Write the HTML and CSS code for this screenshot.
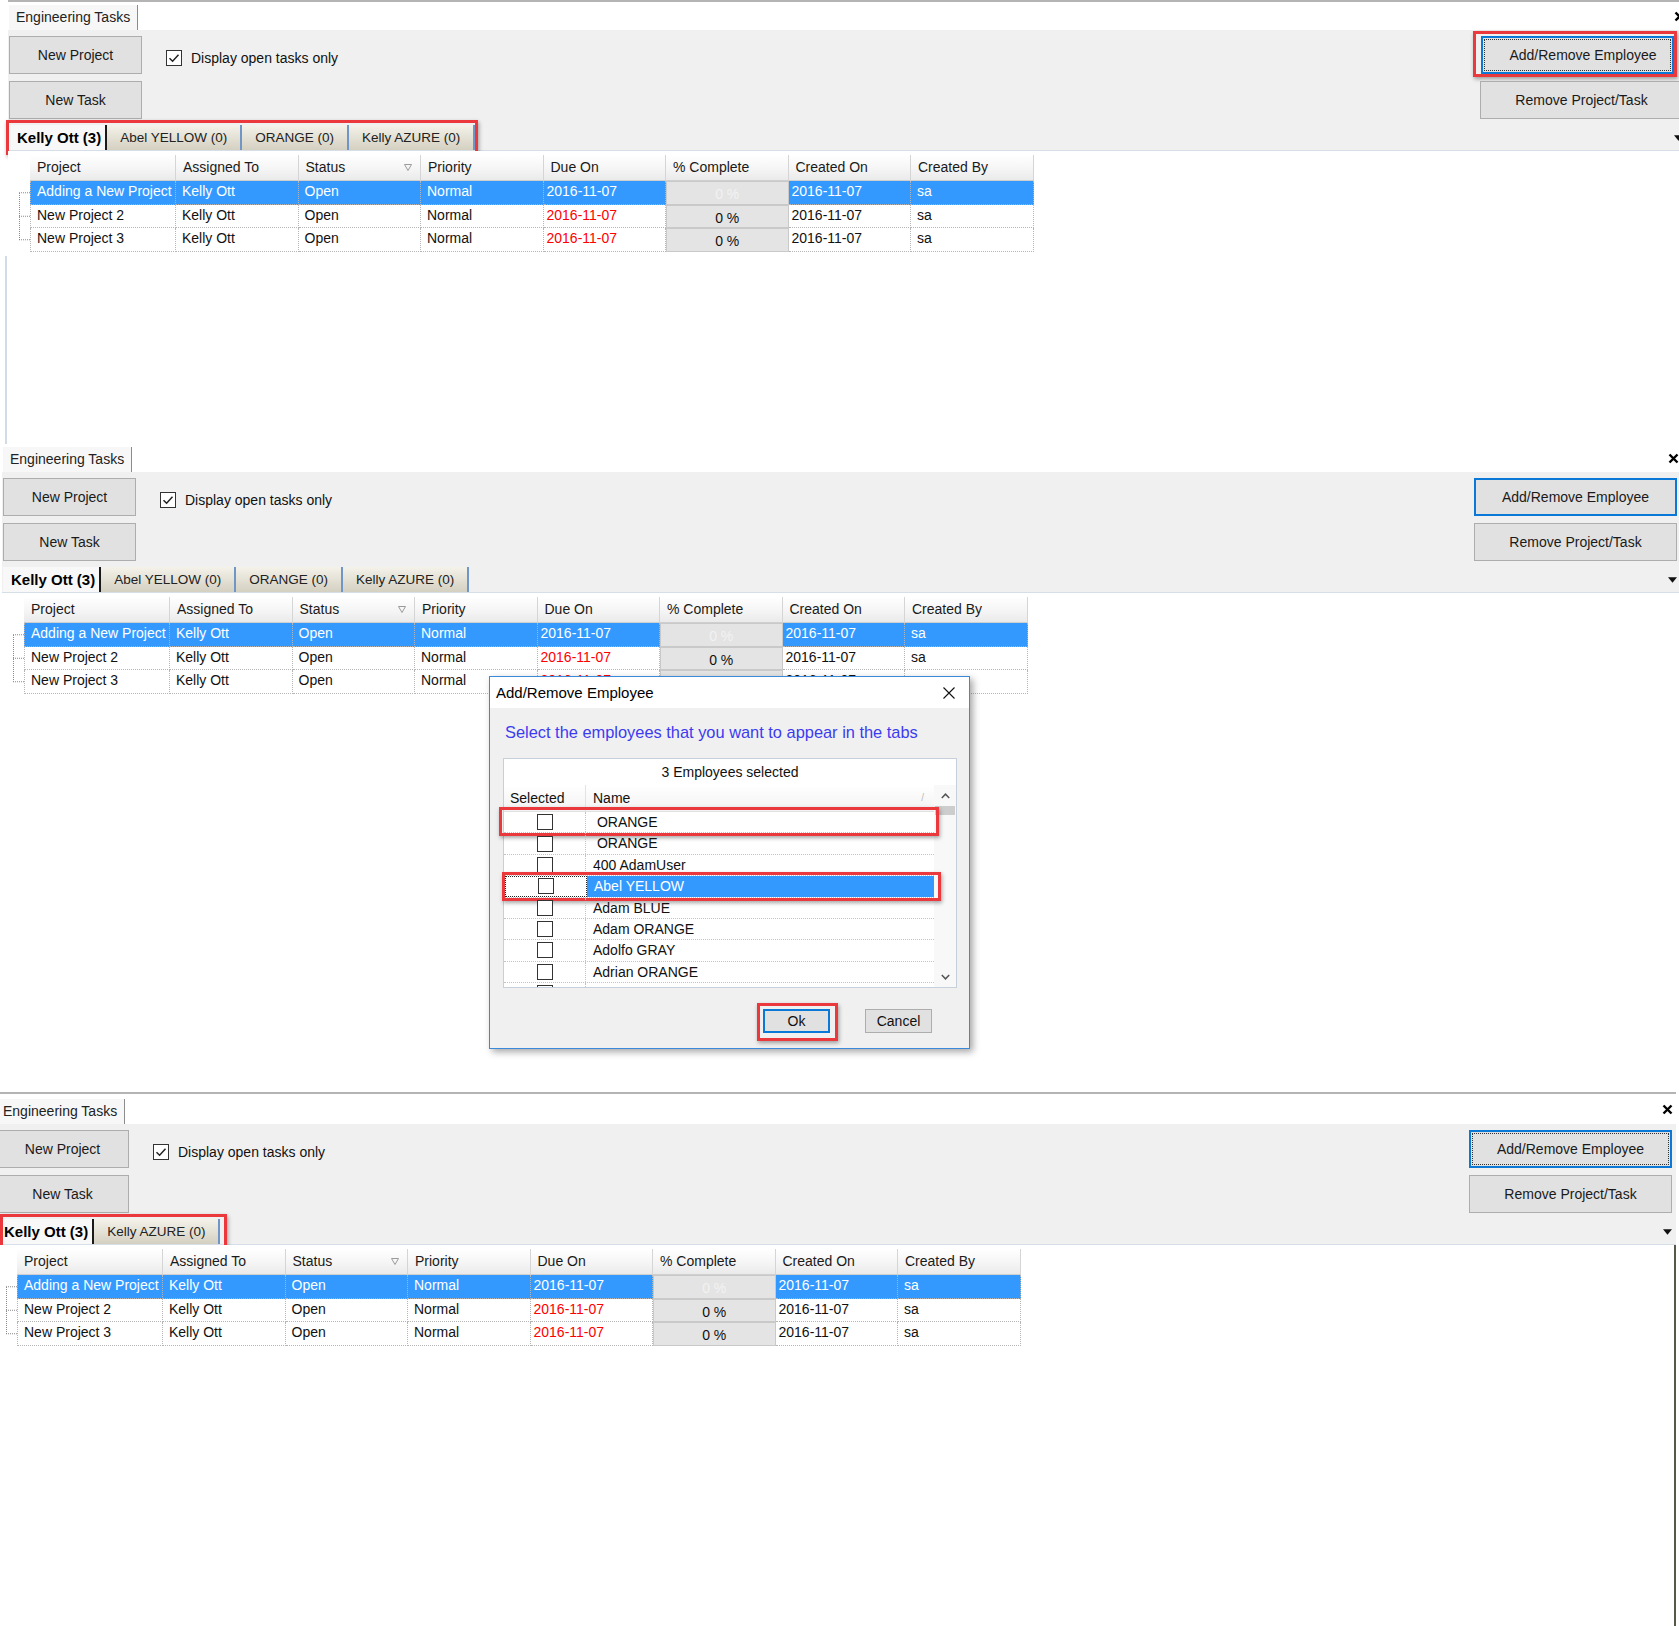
FILE: index.html
```html
<!DOCTYPE html>
<html>
<head>
<meta charset="utf-8">
<title>Engineering Tasks</title>
<link rel="stylesheet" href="styles.css">
</head>
<body>

<section class="panel p1">
  <div class="tabstrip">
    <div class="doctab">Engineering Tasks</div>
    <svg class="close" viewBox="0 0 11 11"><path d="M1.5 1.5L9.5 9.5M9.5 1.5L1.5 9.5"/></svg>
  </div>
  <div class="toolbar">
    <div class="tb-top">
      <div class="btncol"><div class="btn">New Project</div><div class="btn">New Task</div></div>
      <div class="chk"><span class="box"><svg viewBox="0 0 14 14"><path d="M2.5 7.2L5.6 10.2L11.5 3.8"/></svg></span>Display open tasks only</div>
      <div class="btncol right">
        <div class="hl hl-emp"><div class="btn wide focus dotted">Add/Remove Employee</div></div>
        <div class="btn wide">Remove Project/Task</div>
      </div>
    </div>
    <div class="tabrow">
      <div class="hl hl-tabs">
        <div class="emptabs">
          <div class="etab active">Kelly Ott (3)</div>
          <div class="etab">Abel YELLOW (0)</div>
          <div class="etab">ORANGE (0)</div>
          <div class="etab">Kelly AZURE (0)</div>
        </div>
      </div>
      <svg class="dd" viewBox="0 0 8 5"><path d="M0 0H8L4 5Z"/></svg>
    </div>
  </div>
  <div class="content">
    <div class="gridarea">
      <svg class="tree" viewBox="0 0 11 97"><path d="M0.5 38V85M0 37.75H11M0 61.25H11M0 84.75H11"/></svg>
      <div class="grid">
        <div class="hc">Project</div><div class="hc">Assigned To</div><div class="hc">Status<svg class="flt" viewBox="0 0 8 7"><path d="M0.5 0.5H7.5L4 6.5Z"/></svg></div><div class="hc">Priority</div><div class="hc">Due On</div><div class="hc">% Complete</div><div class="hc">Created On</div><div class="hc">Created By</div>
        <div class="c s">Adding a New Project</div><div class="c s">Kelly Ott</div><div class="c s">Open</div><div class="c s">Normal</div><div class="c d s">2016-11-07</div><div class="c pc ps">0 %</div><div class="c d s">2016-11-07</div><div class="c s">sa</div>
        <div class="c">New Project 2</div><div class="c">Kelly Ott</div><div class="c">Open</div><div class="c">Normal</div><div class="c d red">2016-11-07</div><div class="c pc">0 %</div><div class="c d">2016-11-07</div><div class="c">sa</div>
        <div class="c">New Project 3</div><div class="c">Kelly Ott</div><div class="c">Open</div><div class="c">Normal</div><div class="c d red">2016-11-07</div><div class="c pc">0 %</div><div class="c d">2016-11-07</div><div class="c">sa</div>
      </div>
    </div>
    <div class="sideline"></div>
  </div>
</section>

<section class="panel p2">
  <div class="tabstrip">
    <div class="doctab">Engineering Tasks</div>
    <svg class="close" viewBox="0 0 11 11"><path d="M1.5 1.5L9.5 9.5M9.5 1.5L1.5 9.5"/></svg>
  </div>
  <div class="toolbar">
    <div class="tb-top">
      <div class="btncol"><div class="btn">New Project</div><div class="btn">New Task</div></div>
      <div class="chk"><span class="box"><svg viewBox="0 0 14 14"><path d="M2.5 7.2L5.6 10.2L11.5 3.8"/></svg></span>Display open tasks only</div>
      <div class="btncol right">
        <div class="btn wide focus">Add/Remove Employee</div>
        <div class="btn wide">Remove Project/Task</div>
      </div>
    </div>
    <div class="tabrow">
      <div class="emptabs">
        <div class="etab active">Kelly Ott (3)</div>
        <div class="etab">Abel YELLOW (0)</div>
        <div class="etab">ORANGE (0)</div>
        <div class="etab">Kelly AZURE (0)</div>
      </div>
      <svg class="dd" viewBox="0 0 8 5"><path d="M0 0H8L4 5Z"/></svg>
    </div>
  </div>
  <div class="content">
    <div class="gridarea">
      <svg class="tree" viewBox="0 0 11 97"><path d="M0.5 38V85M0 37.75H11M0 61.25H11M0 84.75H11"/></svg>
      <div class="grid">
        <div class="hc">Project</div><div class="hc">Assigned To</div><div class="hc">Status<svg class="flt" viewBox="0 0 8 7"><path d="M0.5 0.5H7.5L4 6.5Z"/></svg></div><div class="hc">Priority</div><div class="hc">Due On</div><div class="hc">% Complete</div><div class="hc">Created On</div><div class="hc">Created By</div>
        <div class="c s">Adding a New Project</div><div class="c s">Kelly Ott</div><div class="c s">Open</div><div class="c s">Normal</div><div class="c d s">2016-11-07</div><div class="c pc ps">0 %</div><div class="c d s">2016-11-07</div><div class="c s">sa</div>
        <div class="c">New Project 2</div><div class="c">Kelly Ott</div><div class="c">Open</div><div class="c">Normal</div><div class="c d red">2016-11-07</div><div class="c pc">0 %</div><div class="c d">2016-11-07</div><div class="c">sa</div>
        <div class="c">New Project 3</div><div class="c">Kelly Ott</div><div class="c">Open</div><div class="c">Normal</div><div class="c d red">2016-11-07</div><div class="c pc">0 %</div><div class="c d">2016-11-07</div><div class="c">sa</div>
      </div>
    </div>
  </div>

  <div class="dlg">
    <div class="dlg-title">
      <span>Add/Remove Employee</span>
      <svg class="dlg-x" viewBox="0 0 12 12"><path d="M0.5 0.5L11.5 11.5M11.5 0.5L0.5 11.5"/></svg>
    </div>
    <div class="dlg-label">Select the employees that you want to appear in the tabs</div>
    <div class="elist">
      <div class="el-cap">3 Employees selected</div>
      <div class="el-main">
        <div class="el-grid">
          <div class="el-head"><div class="eh-sel">Selected</div><div class="eh-name">Name<span class="sortg">/</span></div></div>
          <div class="hl hl-r1"><div class="el-row"><div class="er-sel"><span class="cb"></span></div><div class="er-name">&nbsp;ORANGE</div></div></div>
          <div class="el-row"><div class="er-sel"><span class="cb"></span></div><div class="er-name">&nbsp;ORANGE</div></div>
          <div class="el-row"><div class="er-sel"><span class="cb"></span></div><div class="er-name">400 AdamUser</div></div>
          <div class="hl hl-r4"><div class="el-row cur"><div class="er-sel"><span class="cb"></span></div><div class="er-name">Abel YELLOW</div></div></div>
          <div class="el-row"><div class="er-sel"><span class="cb"></span></div><div class="er-name">Adam BLUE</div></div>
          <div class="el-row"><div class="er-sel"><span class="cb"></span></div><div class="er-name">Adam ORANGE</div></div>
          <div class="el-row"><div class="er-sel"><span class="cb"></span></div><div class="er-name">Adolfo GRAY</div></div>
          <div class="el-row"><div class="er-sel"><span class="cb"></span></div><div class="er-name">Adrian ORANGE</div></div>
          <div class="el-row"><div class="er-sel"><span class="cb"></span></div><div class="er-name">Aida Fernanda Mitchell</div></div>
        </div>
        <div class="vscroll">
          <div class="vs-btn"><svg viewBox="0 0 9 6"><path d="M0.8 5L4.5 1.2L8.2 5"/></svg></div>
          <div class="vs-thumb"></div>
          <div class="vs-track"></div>
          <div class="vs-btn"><svg viewBox="0 0 9 6"><path d="M0.8 1L4.5 4.8L8.2 1"/></svg></div>
        </div>
      </div>
    </div>
    <div class="dlg-btns">
      <div class="hl hl-ok"><div class="dbtn ok">Ok</div></div>
      <div class="dbtn">Cancel</div>
    </div>
  </div>
</section>

<section class="panel p3">
  <div class="tabstrip">
    <div class="doctab">Engineering Tasks</div>
    <svg class="close" viewBox="0 0 11 11"><path d="M1.5 1.5L9.5 9.5M9.5 1.5L1.5 9.5"/></svg>
  </div>
  <div class="toolbar">
    <div class="tb-top">
      <div class="btncol"><div class="btn">New Project</div><div class="btn">New Task</div></div>
      <div class="chk"><span class="box"><svg viewBox="0 0 14 14"><path d="M2.5 7.2L5.6 10.2L11.5 3.8"/></svg></span>Display open tasks only</div>
      <div class="btncol right">
        <div class="btn wide focus dotted">Add/Remove Employee</div>
        <div class="btn wide">Remove Project/Task</div>
      </div>
    </div>
    <div class="tabrow">
      <div class="hl hl-tabs3">
        <div class="emptabs">
          <div class="etab active">Kelly Ott (3)</div>
          <div class="etab">Kelly AZURE (0)</div>
        </div>
      </div>
      <svg class="dd" viewBox="0 0 8 5"><path d="M0 0H8L4 5Z"/></svg>
    </div>
  </div>
  <div class="content">
    <div class="gridarea">
      <svg class="tree" viewBox="0 0 11 97"><path d="M0.5 38V85M0 37.75H11M0 61.25H11M0 84.75H11"/></svg>
      <div class="grid">
        <div class="hc">Project</div><div class="hc">Assigned To</div><div class="hc">Status<svg class="flt" viewBox="0 0 8 7"><path d="M0.5 0.5H7.5L4 6.5Z"/></svg></div><div class="hc">Priority</div><div class="hc">Due On</div><div class="hc">% Complete</div><div class="hc">Created On</div><div class="hc">Created By</div>
        <div class="c s">Adding a New Project</div><div class="c s">Kelly Ott</div><div class="c s">Open</div><div class="c s">Normal</div><div class="c d s">2016-11-07</div><div class="c pc ps">0 %</div><div class="c d s">2016-11-07</div><div class="c s">sa</div>
        <div class="c">New Project 2</div><div class="c">Kelly Ott</div><div class="c">Open</div><div class="c">Normal</div><div class="c d red">2016-11-07</div><div class="c pc">0 %</div><div class="c d">2016-11-07</div><div class="c">sa</div>
        <div class="c">New Project 3</div><div class="c">Kelly Ott</div><div class="c">Open</div><div class="c">Normal</div><div class="c d red">2016-11-07</div><div class="c pc">0 %</div><div class="c d">2016-11-07</div><div class="c">sa</div>
      </div>
    </div>
  </div>
</section>

</body>
</html>
```

FILE: styles.css
```css
* { box-sizing: border-box; }
html, body { margin: 0; padding: 0; }
body {
  width: 1679px;
  height: 1626px;
  overflow: hidden;
  background: #fff;
  font-family: "Liberation Sans", Arial, sans-serif;
  font-size: 14px;
  color: #111;
}

/* ---------- panels ---------- */
.panel {
  position: relative;
  display: flex;
  flex-direction: column;
  width: 1677px;
  --rp: 2px;
  --cx: 0px;
  --strip: 28px;
}
.p1 { margin-left: 8px; height: 444px; border-top: 2px solid #b4b4b4; }
.p2 { margin-left: 2px; height: 648px; }
.p3 { margin-left: -5px; width: 1681px; height: 534px; border-top: 2px solid #b4b4b4; --rp: 4px; --cx: 3px; --strip: 30px; }

.tabstrip {
  flex: none;
  height: var(--strip);
  display: flex;
  align-items: flex-end;
  justify-content: space-between;
  padding: 0 var(--cx) 0 1px;
  background: #fff;
}
.doctab {
  height: 25px;
  padding: 0 7px;
  font-size: 14px;
  line-height: 24px;
  background: #f7f7f7;
  border-right: 1px solid #8c8c8c;
  color: #222;
}
.close {
  align-self: center;
  width: 11px;
  height: 11px;
  fill: none;
  stroke: #000;
  stroke-width: 2.4;
}

/* ---------- toolbar ---------- */
.toolbar {
  flex: none;
  height: 121px;
  background: #f0f0f0;
  border-bottom: 1px solid #d6dee8;
  padding: 6px var(--rp) 0 1px;
  display: flex;
  flex-direction: column;
}
.tb-top { display: flex; align-items: flex-start; }
.btncol { display: flex; flex-direction: column; gap: 7px; }
.btncol.right { margin-left: auto; align-items: flex-end; }
.btn {
  width: 133px;
  height: 38px;
  background: #e1e1e1;
  border: 1px solid #adadad;
  display: flex;
  align-items: center;
  justify-content: center;
  font-size: 14px;
  color: #1a1a1a;
}
.btn.wide { width: 203px; }
.btn.focus { border: 2px solid #0a78d7; }
.btn.dotted { outline: 1px dotted #333; outline-offset: -4px; }

.chk {
  margin: 14px 0 0 24px;
  display: flex;
  align-items: center;
  gap: 9px;
  font-size: 14px;
}
.box {
  width: 16px;
  height: 16px;
  border: 1px solid #333;
  background: #fff;
  display: flex;
}
.box svg { width: 14px; height: 14px; fill: none; stroke: #222; stroke-width: 1.5; }

.tabrow {
  margin-top: 6px;
  height: 25px;
  display: flex;
  align-items: center;
  justify-content: space-between;
}
.emptabs { display: flex; height: 25px; }
.etab {
  padding: 0 13px;
  line-height: 25px;
  font-size: 13.5px;
  background: linear-gradient(#f4f2ea, #d4d0c1);
  border-right: 2px solid #7096c8;
  color: #222;
  white-space: nowrap;
}
.etab.active {
  padding: 0 4px 0 8px;
  font-weight: bold;
  font-size: 15px;
  background: #f8f8f8;
  border-right: 2px solid #1a1a1a;
  color: #000;
}
.dd { width: 9px; height: 6px; fill: #111; }

/* ---------- red highlight boxes ---------- */
.hl {
  border: 3px solid #ea383d;
  box-shadow: 1px 2px 4px rgba(0, 0, 0, 0.35);
  flex: none;
}
.hl-tabs { margin: -5px -3px; padding: 2px 0; }
.hl-tabs3 { margin: -5px 0 -5px 4px; padding: 2px 4px 2px 0; }
.hl-tabs3 .etab.active { padding-left: 1px; }
.hl-emp { margin: -5px 6px -3px -8px; padding: 2px 0 0 5px; }
.hl-emp .btn { width: 193px; padding-left: 11px; }

/* ---------- task grid ---------- */
.content { flex: 1; background: #fff; padding: 4px 0 0 11px; }
.p3 .content { border-right: 2px solid #57574a; }
.gridarea { display: flex; align-items: flex-start; }
.sideline {
  margin: 4px 0 0 -14px;
  width: 2px;
  height: 200px;
  background: #d3dbe6;
}
.tree {
  width: 11px;
  height: 97px;
  flex: none;
  fill: none;
  stroke: #8a8a8a;
  stroke-dasharray: 1 1;
}
.grid {
  display: grid;
  grid-template-columns: 146px repeat(7, 122.5px);
  grid-template-rows: 26px;
  grid-auto-rows: 23.5px;
}
.hc {
  background: linear-gradient(#ffffff, #f4f4f4 60%, #eaeaea);
  border-right: 1px solid #d5d5d5;
  border-bottom: 1px solid #cfcfcf;
  padding-left: 7px;
  line-height: 25px;
  font-size: 14px;
  color: #1a1a1a;
  display: flex;
  justify-content: space-between;
  align-items: center;
}
.flt { width: 8px; height: 7px; margin-right: 8px; fill: none; stroke: #9a9a9a; }
.c {
  border-right: 1px dotted #b5b5b5;
  border-bottom: 1px dotted #b5b5b5;
  padding-left: 6px;
  line-height: 21px;
  font-size: 14px;
  white-space: nowrap;
  overflow: hidden;
  color: #111;
}
.c:nth-child(8n+1) { border-left: 1px dotted #b5b5b5; }
.c.d { padding-left: 3px; }
.c.s { background: #3399ff; color: #fff; }
.c.red { color: #f00; }
.c.pc {
  padding: 2px 0 0;
  text-align: center;
  background: #e4e4e4;
  border: 1px solid #c9c9c9;
}
.c.ps { color: #f2f2f2; }

/* ---------- dialog ---------- */
.dlg {
  position: absolute;
  left: 487px;
  top: 232px;
  width: 481px;
  height: 373px;
  background: #f0f0f0;
  border: 1px solid #3b8ad9;
  box-shadow: 3px 3px 7px rgba(0, 0, 0, 0.35);
  z-index: 5;
  display: flex;
  flex-direction: column;
}
.dlg-title {
  height: 31px;
  flex: none;
  background: #fff;
  display: flex;
  align-items: center;
  justify-content: space-between;
  padding: 0 14px 0 6px;
  font-size: 15px;
  color: #000;
}
.dlg-x { width: 12px; height: 12px; stroke: #111; stroke-width: 1.1; fill: none; }
.dlg-label {
  margin: 14px 0 0 15px;
  font-size: 16.4px;
  line-height: 20px;
  color: #3b3bf0;
  white-space: nowrap;
}
.elist {
  margin: 16px 0 0 13px;
  width: 454px;
  height: 230px;
  flex: none;
  border: 1px solid #c6d0da;
  background: #fff;
  display: flex;
  flex-direction: column;
}
.el-cap { height: 26px; flex: none; text-align: center; line-height: 26px; font-size: 14px; }
.el-main { flex: 1; display: flex; min-height: 0; }
.el-grid {
  width: 430px;
  flex: none;
  display: flex;
  flex-direction: column;
  clip-path: inset(-12px -14px 0 -12px);
}
.el-head {
  height: 27px;
  flex: none;
  display: flex;
  background: linear-gradient(#ffffff, #f3f3f3);
  border-bottom: 1px solid #e0e0e0;
}
.el-head div { line-height: 26px; font-size: 14px; }
.eh-sel { width: 82px; padding-left: 6px; border-right: 1px solid #e3e3e3; }
.eh-name { flex: 1; padding-left: 7px; display: flex; justify-content: space-between; }
.sortg { color: #bbb; font-size: 10px; margin-right: 10px; }
.el-row {
  height: 21.375px;
  flex: none;
  display: flex;
  border-bottom: 1px dotted #c4c4c4;
}
.er-sel {
  width: 82px;
  display: flex;
  align-items: center;
  justify-content: center;
  border-right: 1px dotted #c4c4c4;
}
.er-name { flex: 1; padding-left: 7px; line-height: 20px; font-size: 14px; white-space: nowrap; }
.cb { width: 16px; height: 16px; border: 1px solid #333; background: #fff; }
.el-row.cur .er-sel { outline: 1px dotted #222; outline-offset: -1px; }
.el-row.cur .er-name { background: #3399ff; color: #fff; }
.hl-r1 { margin: -5px -5px -3px -5px; padding: 2px 2px 0 2px; }
.hl-r4 { margin: -4px -7px -3px -2px; padding: 1px 4px 0 0; }

.vscroll {
  width: 22px;
  flex: none;
  display: flex;
  flex-direction: column;
  background: #f8f8f8;
}
.vs-btn { height: 21px; flex: none; display: flex; align-items: center; justify-content: center; }
.vs-btn svg { width: 9px; height: 6px; fill: none; stroke: #555; stroke-width: 1.5; }
.vs-thumb { height: 9px; flex: none; background: #cdcdcd; margin: 0 1px; }
.vs-track { flex: 1; }

.dlg-btns {
  margin-top: 21px;
  display: flex;
  align-items: flex-start;
  justify-content: flex-end;
  gap: 35px;
  padding-right: 37px;
}
.dbtn {
  width: 67px;
  height: 24px;
  background: #e1e1e1;
  border: 1px solid #adadad;
  display: flex;
  align-items: center;
  justify-content: center;
  font-size: 14px;
  color: #111;
}
.dbtn.ok { border: 2px solid #0a78d7; }
.hl-ok { margin: -6px -8px -8px -6px; padding: 3px 5px 5px 3px; }
```
